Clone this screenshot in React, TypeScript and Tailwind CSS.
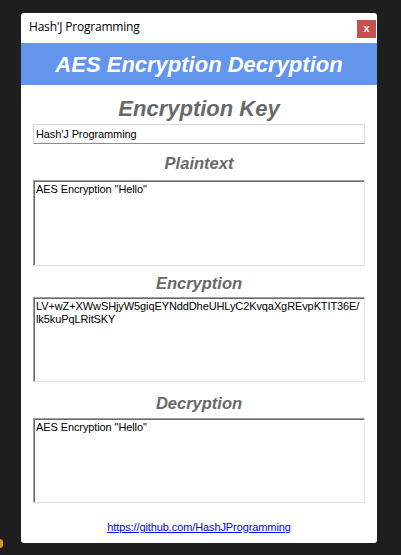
const heading = "text-center font-bold italic text-[#696969] text-[16.5px] leading-[19px]";
const box =
  "border-t border-l border-t-[#a0a0a0] border-l-[#a0a0a0] border-r border-b border-r-[#e3e3e3] border-b-[#e3e3e3] shadow-[inset_1px_1px_0_#696969] pt-[2px] pl-[2px] pr-[2px] text-[11px] leading-[13px] tracking-[-0.1px] text-black overflow-hidden whitespace-pre";

export default function App() {
  return (
    <div
      className="relative w-[401px] h-[555px] bg-[#1e1e1e] pl-[21px] pt-[13px] overflow-hidden"
      style={{ fontFamily: '"Liberation Sans", Arial, sans-serif' }}
    >
      {/* stray desktop icon edge */}
      <span className="absolute left-[-3px] top-[539px] w-[6px] h-[9px] rounded-full bg-[#d9902a]" />

      <div className="w-[356px] h-[530px] bg-white rounded-[3px] flex flex-col">
        {/* Title bar */}
        <div className="h-[30px] flex items-start justify-between pl-[8px]">
          <span
            className="mt-[6px] text-[12px] leading-[16px] text-black tracking-[-0.2px]"
            style={{ fontFamily: '"Open Sans", "Noto Sans", sans-serif' }}
          >
            Hash'J Programming
          </span>
          <div className="mt-[7px] mr-[1px] w-[19px] h-[18px] bg-[#c75050] flex items-center justify-center text-white font-bold text-[11px] leading-none pb-[2px]">
            x
          </div>
        </div>

        {/* Header */}
        <div className="h-[42px] bg-[#6495ed] flex items-center justify-center">
          <span className="text-white font-bold italic text-[22px] leading-[25px]">
            AES Encryption Decryption
          </span>
        </div>

        <div className="px-[12px] flex flex-col">
          <div className="mt-[11px] text-center font-bold italic text-[#696969] text-[22px] leading-[25px]">
            Encryption Key
          </div>
          <div className="mt-[3px] h-[20px] border border-[#d9d9d9] border-b-[#8c8c8c] pl-[2px] pt-[3px] text-[11px] leading-[13px] tracking-[-0.1px] text-black">
            Hash'J Programming
          </div>

          <div className={`mt-[10px] ${heading}`}>Plaintext</div>
          <div className={`mt-[7px] h-[86px] ${box}`}>AES Encryption "Hello"</div>

          <div className={`mt-[8px] ${heading}`}>Encryption</div>
          <div className={`mt-[4px] h-[85px] ${box}`}>
            {"LV+wZ+XWwSHjyW5giqEYNddDheUHLyC2KvqaXgREvpKTIT36E/\nlk5kuPqLRitSKY"}
          </div>

          <div className={`mt-[12px] ${heading}`}>Decryption</div>
          <div className={`mt-[5px] h-[85px] ${box}`}>AES Encryption "Hello"</div>

          <div className="mt-[18px] text-center text-[11px] leading-[13px]">
            <a href="#" className="text-[#0000ff] underline tracking-[-0.1px]">
              https://github.com/HashJProgramming
            </a>
          </div>
        </div>
      </div>
    </div>
  );
}
